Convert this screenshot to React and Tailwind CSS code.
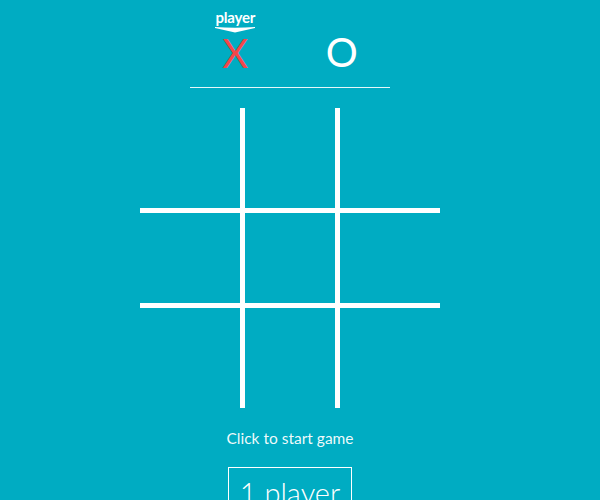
export default function App() {
  const cells = [0, 1, 2, 3, 4, 5, 6, 7, 8];
  return (
    <div className="w-[600px] h-[500px] overflow-hidden bg-[#00acc2] text-white font-['Lato','Liberation_Sans',sans-serif]">
      <div className="w-[580px]">
        <div className="w-[200px] h-[88px] mx-auto flex border-b border-white/90">
          <div className="w-[100px] flex flex-col items-center pt-[9px] -ml-[3px]">
            <div className="text-[15px] leading-[17px] font-bold tracking-[-0.2px]">player</div>
            <svg width="40" height="6" viewBox="0 0 40 6" className="mt-[1px]">
              <path d="M0 0 Q20 1.5 40 0 L40 1 L20 5.5 L0 1 Z" fill="white" />
            </svg>
            <div className="text-[40px] leading-[36px] font-normal text-[#f2474a] mt-[2px]">X</div>
          </div>
          <div className="w-[100px] flex flex-col items-center pt-[34px] ml-[10px]">
            <div className="text-[40px] leading-[36px] font-normal">O</div>
          </div>
        </div>
        <div className="w-[300px] h-[300px] mx-auto mt-[20px] grid grid-cols-3 grid-rows-3">
          {cells.map((i) => {
            const col = i % 3;
            const row = Math.floor(i / 3);
            return (
              <div
                key={i}
                className={
                  "border-white " +
                  (col === 1 ? "border-x-[5px] " : "") +
                  (row === 1 ? "border-y-[5px]" : "")
                }
              />
            );
          })}
        </div>
        <div className="text-center text-[15.5px] leading-[18px] mt-[21px] text-white/95">Click to start game</div>
        <div className="flex justify-center mt-[20px]">
          <button className="w-[124px] h-[50px] border border-white text-[29px] leading-[44px] font-light text-white pt-[2px]">
            1 player
          </button>
        </div>
      </div>
    </div>
  );
}
